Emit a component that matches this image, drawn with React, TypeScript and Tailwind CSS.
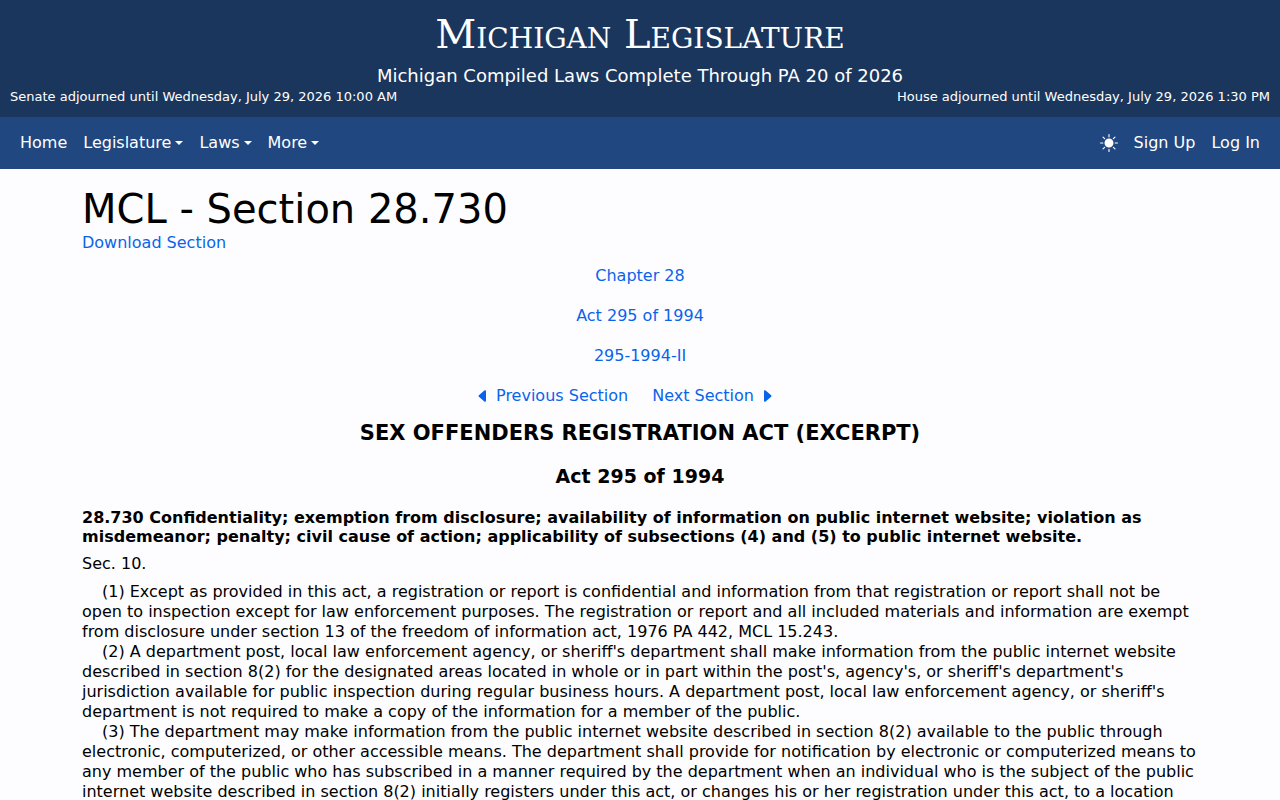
import { BsSunFill, BsCaretLeftFill, BsCaretRightFill } from 'react-icons/bs';

const menus = ['Legislature', 'Laws', 'More'];

const parents = ['Chapter 28', 'Act 295 of 1994', '295-1994-II'];

const paragraphs = [
  "(1) Except as provided in this act, a registration or report is confidential and information from that registration or report shall not be open to inspection except for law enforcement purposes. The registration or report and all included materials and information are exempt from disclosure under section 13 of the freedom of information act, 1976 PA 442, MCL 15.243.",
  "(2) A department post, local law enforcement agency, or sheriff's department shall make information from the public internet website described in section 8(2) for the designated areas located in whole or in part within the post's, agency's, or sheriff's department's jurisdiction available for public inspection during regular business hours. A department post, local law enforcement agency, or sheriff's department is not required to make a copy of the information for a member of the public.",
  "(3) The department may make information from the public internet website described in section 8(2) available to the public through electronic, computerized, or other accessible means. The department shall provide for notification by electronic or computerized means to any member of the public who has subscribed in a manner required by the department when an individual who is the subject of the public internet website described in section 8(2) initially registers under this act, or changes his or her registration under this act, to a location",
];

function Header() {
  return (
    <header className="bg-[#1a365d] px-2.5 pt-2.5 pb-3 text-center text-white">
      <h1 className="font-['DejaVu_Serif',serif] text-[40px] leading-12 [font-variant:small-caps]">
        Michigan Legislature
      </h1>
      <p className="mt-[5px] text-[18px] leading-[26px]">Michigan Compiled Laws Complete Through PA 20 of 2026</p>
      <div className="flex justify-between text-[13px] leading-4">
        <span>Senate adjourned until Wednesday, July 29, 2026 10:00 AM</span>
        <span>House adjourned until Wednesday, July 29, 2026 1:30 PM</span>
      </div>
    </header>
  );
}

function NavBar() {
  return (
    <nav className="flex items-center justify-between bg-[#214780] px-5 py-3.5 leading-6 text-white">
      <div className="flex gap-4">
        <a href="#home">Home</a>
        {menus.map((menu) => (
          <button key={menu} type="button" className="flex items-center gap-1">
            {menu}
            <span className="border-x-4 border-t-4 border-x-transparent border-t-white" />
          </button>
        ))}
      </div>
      <div className="flex items-center gap-4">
        <button type="button" aria-label="Toggle theme">
          <BsSunFill className="inline-block size-[18px] align-[-4px]" />
        </button>
        <a href="#signup">Sign Up</a>
        <a href="#login">Log In</a>
      </div>
    </nav>
  );
}

export default function App() {
  return (
    <div className="min-h-screen bg-[#fdfdff] font-['DejaVu_Sans',sans-serif] text-[16px] text-black">
      <Header />
      <NavBar />
      <main className="mx-auto max-w-[1140px] px-3 pt-4">
        <h1 className="text-[40px] leading-12">MCL - Section 28.730</h1>
        <a href="#download" className="block leading-[19px] text-[#0a64ea]">
          Download Section
        </a>
        <div className="mt-3 flex flex-col items-center gap-4 leading-6 text-[#0a64ea]">
          {parents.map((parent) => (
            <a key={parent} href="#parent">
              {parent}
            </a>
          ))}
          <div className="flex gap-6 pr-[30px]">
            <a href="#previous">
              <BsCaretLeftFill className="mr-[5px] inline-block align-[-3px]" />
              Previous Section
            </a>
            <a href="#next">
              Next Section
              <BsCaretRightFill className="ml-[5px] inline-block align-[-3px]" />
            </a>
          </div>
        </div>
        <h2 className="mt-3 text-center text-[21px] leading-[26px] font-bold">
          SEX OFFENDERS REGISTRATION ACT (EXCERPT)
        </h2>
        <h3 className="mt-[18px] text-center text-[19px] leading-6 font-bold">Act 295 of 1994</h3>
        <h4 className="mt-5 leading-[19px] font-bold">
          28.730 Confidentiality; exemption from disclosure; availability of information on public internet website;
          violation as misdemeanor; penalty; civil cause of action; applicability of subsections (4) and (5) to public
          internet website.
        </h4>
        <p className="mt-2 leading-5">Sec. 10.</p>
        <div className="mt-2 leading-5">
          {paragraphs.map((text) => (
            <p key={text} className="indent-5">
              {text}
            </p>
          ))}
        </div>
      </main>
    </div>
  );
}
